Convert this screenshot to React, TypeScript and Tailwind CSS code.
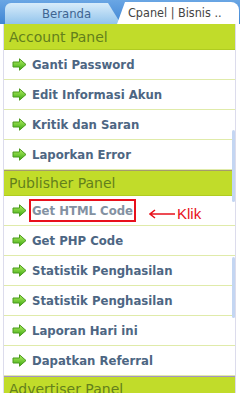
import React from 'react';

const Arrow = () => (
  <svg width="15" height="13" viewBox="0 0 15 13" className="shrink-0">
    <defs>
      <linearGradient id="ga" x1="0" y1="0" x2="0" y2="1">
        <stop offset="0" stopColor="#b4f060" />
        <stop offset="1" stopColor="#3ca814" />
      </linearGradient>
    </defs>
    <path d="M1 4 H7.5 V0.8 L14 6.5 L7.5 12.2 V9 H1 Z" fill="url(#ga)" stroke="#4a9a1c" strokeWidth="1" strokeLinejoin="round" />
  </svg>
);

const Header = ({ title, top }: { title: string; top: string }) => (
  <div className={`h-[26px] bg-[#c1dc2a] border-t ${top} border-b border-b-[#b0cc20] flex items-center pl-[5px] text-[14px] text-[#63801c]`}>
    {title}
  </div>
);

const Item = ({ label, boxed }: { label: string; boxed?: boolean }) => (
  <div className="h-[30px] border-b border-[#e0ebaa] flex items-center pl-[8px] gap-[5px]">
    <Arrow />
    {boxed ? (
      <span className="relative font-bold text-[13px] text-[#8391a2] border-2 border-[#e8101c] px-[1px] h-[23px] flex items-center -ml-[3px] font-['DejaVu_Sans_Condensed','DejaVu_Sans',sans-serif]">
        {label}
        <span className="absolute left-[118px] top-[2px] flex items-center text-[#e8101c] font-normal font-['Liberation_Sans',sans-serif] text-[15px] whitespace-nowrap">
          <svg width="26" height="10" viewBox="0 0 26 10" className="mr-[2px]">
            <path d="M1 5 H26 M6 1 L1 5 L6 9" stroke="#e8101c" strokeWidth="1.6" fill="none" />
          </svg>
          Klik
        </span>
      </span>
    ) : (
      <span className="font-bold text-[13px] text-[#4d6683] font-['DejaVu_Sans_Condensed','DejaVu_Sans',sans-serif]">{label}</span>
    )}
  </div>
);

export default function App() {
  return (
    <div className="w-[240px] h-[420px] bg-white overflow-hidden font-['DejaVu_Sans',sans-serif]">
      <div className="h-[24px] bg-gradient-to-b from-[#6aa6e4] to-[#3f86d4] flex items-end font-['DejaVu_Sans_Condensed','DejaVu_Sans',sans-serif]">
        <div className="ml-[5px] w-[116px] h-[21px] rounded-tl-[6px] bg-gradient-to-b from-[#d8ecfa] to-[#92c4ec] [clip-path:polygon(0_0,103px_0,116px_100%,0_100%)] flex items-center pl-[37px] text-[13px] text-[#3e6491]">
          Beranda
        </div>
        <div className="-ml-[4px] w-[122px] h-[22px] bg-white rounded-tr-[8px] [clip-path:polygon(8px_0,100%_0,100%_100%,0_100%)] flex items-center pl-[11px] text-[12.5px] text-[#444] whitespace-nowrap">
          Cpanel | Bisnis ..
        </div>
      </div>
      <div className="relative ml-[3px] w-[233px] h-[369px] overflow-hidden border-x border-[#dcdcec]">
        <Header title="Account Panel" top="border-t-[#c1dc2a]" />
        <Item label="Ganti Password" />
        <Item label="Edit Informasi Akun" />
        <Item label="Kritik dan Saran" />
        <Item label="Laporkan Error" />
        <Header title="Publisher Panel" top="border-t-[#a59b6c]" />
        <Item label="Get HTML Code" boxed />
        <Item label="Get PHP Code" />
        <Item label="Statistik Penghasilan" />
        <Item label="Statistik Penghasilan" />
        <Item label="Laporan Hari ini" />
        <Item label="Dapatkan Referral" />
        <Header title="Advertiser Panel" top="border-t-[#a393c4]" />
        <div className="absolute right-0 top-[106px] w-[3px] h-[72px] rounded-full bg-[#c4d6f2]" />
        <div className="absolute right-0 top-[233px] w-[3px] h-[61px] rounded-full bg-[#c4d6f2]" />
      </div>
    </div>
  );
}
